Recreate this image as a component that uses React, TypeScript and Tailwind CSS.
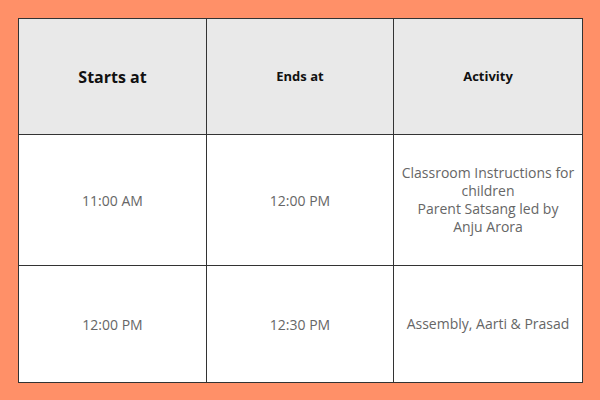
import React from 'react';

const rows = [
  {
    start: '11:00 AM',
    end: '12:00 PM',
    activity: ['Classroom Instructions for children', 'Parent Satsang led by Anju Arora'],
    height: 'h-[131px]',
  },
  {
    start: '12:00 PM',
    end: '12:30 PM',
    activity: ['Assembly, Aarti & Prasad'],
    height: 'h-[117px]',
  },
];

const App: React.FC = () => {
  return (
    <div className="w-[600px] h-[400px] bg-[#ff9068] p-[18px] font-['Open_Sans',sans-serif]">
      <table className="w-[564px] border-collapse table-fixed">
        <colgroup>
          <col className="w-[188px]" />
          <col className="w-[187px]" />
          <col className="w-[189px]" />
        </colgroup>
        <thead>
          {/* Header row */}
          <tr className="h-[116px] bg-[#e9e9e9]">
            <th className="border-[1.5px] border-[#333] text-[16px] font-bold text-[#111]">Starts at</th>
            <th className="border-[1.5px] border-[#333] text-[13px] font-bold text-[#111]">Ends at</th>
            <th className="border-[1.5px] border-[#333] text-[13px] font-bold text-[#111]">Activity</th>
          </tr>
        </thead>
        <tbody>
          {rows.map((row) => (
            <tr key={row.start} className={`${row.height} bg-white`}>
              <td className="border-[1.5px] border-[#333] text-center text-[14px] text-[#666]">{row.start}</td>
              <td className="border-[1.5px] border-[#333] text-center text-[14px] text-[#666]">{row.end}</td>
              <td className="border-[1.5px] border-[#333] text-center text-[14px] leading-[18px] text-[#666]">
                <div className="w-[173px] mx-auto">
                  {row.activity.map((line) => (
                    <div key={line}>{line}</div>
                  ))}
                </div>
              </td>
            </tr>
          ))}
        </tbody>
      </table>
    </div>
  );
};

export default App;
